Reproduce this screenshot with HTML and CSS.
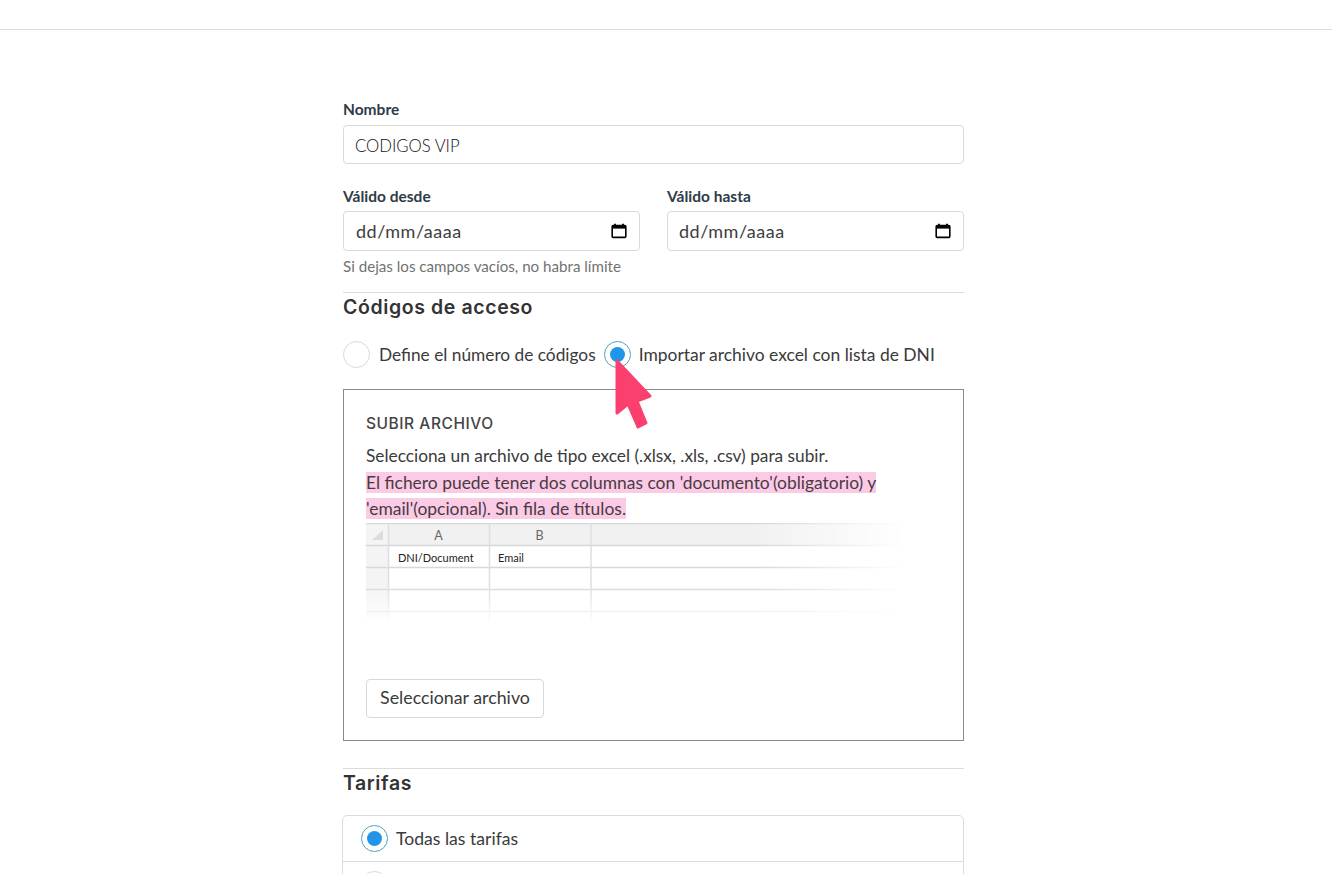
FILE: index.html
```html
<!DOCTYPE html>
<html lang="es">
<head>
<meta charset="utf-8">
<title>Códigos VIP</title>
<link rel="stylesheet" href="styles.css">
</head>
<body>
<header class="topbar"></header>
<main class="form">
  <label class="label">Nombre</label>
  <div class="input name-input">CODIGOS VIP</div>
  <div class="dates">
    <div class="date-col from">
      <label class="label">Válido desde</label>
      <div class="input date-input"><span>dd/mm/aaaa</span>
        <svg class="cal" viewBox="0 0 16 16" width="16" height="16"><path d="M4 0.8v2M12 0.8v2" stroke="#000" stroke-width="1.8"/><rect x="1.2" y="2.6" width="13.6" height="11.8" rx="1" fill="none" stroke="#000" stroke-width="1.6"/><rect x="1.2" y="2.6" width="13.6" height="3" fill="#000"/></svg>
      </div>
    </div>
    <div class="date-col to">
      <label class="label">Válido hasta</label>
      <div class="input date-input"><span>dd/mm/aaaa</span>
        <svg class="cal" viewBox="0 0 16 16" width="16" height="16"><path d="M4 0.8v2M12 0.8v2" stroke="#000" stroke-width="1.8"/><rect x="1.2" y="2.6" width="13.6" height="11.8" rx="1" fill="none" stroke="#000" stroke-width="1.6"/><rect x="1.2" y="2.6" width="13.6" height="3" fill="#000"/></svg>
      </div>
    </div>
  </div>
  <p class="hint">Si dejas los campos vacíos, no habra límite</p>
  <h2 class="section first">Códigos de acceso</h2>
  <div class="radios">
    <span class="radio"></span><span class="radio-text first-option">Define el número de códigos</span>
    <span class="radio on"></span><span class="radio-text second-option">Importar archivo excel con lista de DNI</span>
    <svg class="pointer" viewBox="0 0 44 72" width="44" height="72"><path d="M4 3 L37 38 L24 43 L33 65 L25 69 L15 46 L4 55 Z" fill="#fb3f6f" stroke="#fb3f6f" stroke-width="3" stroke-linejoin="round"/></svg>
  </div>
  <section class="upload">
    <h3 class="upload-title">SUBIR ARCHIVO</h3>
    <p class="upload-text">Selecciona un archivo de tipo excel (.xlsx, .xls, .csv) para subir.<br><mark>El fichero puede tener dos columnas con 'documento'(obligatorio) y 'email'(opcional). Sin fila de títulos.</mark></p>
    <svg class="sheet" viewBox="0 0 540 104" width="540" height="104">
      <defs>
        <linearGradient id="fx" x1="0" x2="1" y1="0" y2="0"><stop offset="0.72" stop-color="#fff"/><stop offset="1" stop-color="#000"/></linearGradient>
        <linearGradient id="fy" x1="0" x2="0" y1="0" y2="1"><stop offset="0.6" stop-color="#fff"/><stop offset="0.98" stop-color="#000"/></linearGradient>
        <mask id="mx"><rect width="540" height="104" fill="url(#fx)"/></mask>
        <mask id="my"><rect width="540" height="104" fill="url(#fy)"/></mask>
      </defs>
      <g mask="url(#mx)">
        <g mask="url(#my)">
          <rect width="540" height="22" y="0.5" fill="#f1f1f1"/>
          <rect width="22" height="104" y="0" fill="#f4f4f4"/>
          <path d="M0 0.5H540M0 22.5H540M0 44.5H540M0 66.5H540M0 88.5H540" stroke="#d8d8d8" stroke-width="1.4" fill="none"/>
          <path d="M22.500 0V104M123.500 0V104M225 0V104" stroke="#dedede" stroke-width="1.5" fill="none"/>
          <path d="M6 17 L17 17 L17 7 Z" fill="#dcdcdc"/>
        </g>
      </g>
      <text class="col" x="72.500" y="17" text-anchor="middle">A</text>
      <text class="col" x="173.500" y="17" text-anchor="middle">B</text>
      <text class="cell" x="32" y="39">DNI/Document</text>
      <text class="cell" x="132" y="39">Email</text>
    </svg>
    <button class="btn" type="button">Seleccionar archivo</button>
  </section>
  <h2 class="section tarifas">Tarifas</h2>
  <div class="list">
    <div class="list-row"><span class="radio on"></span><span class="list-text">Todas las tarifas</span></div>
    <div class="list-row"><span class="radio"></span></div>
  </div>
</main>
</body>
</html>
```
FILE: styles.css
```css
html, body {
  margin: 0;
  height: 874px;
  overflow: hidden;
  background: #fff;
  font-family: "Lato", sans-serif;
  color: #3a3a3a;
}
.topbar {
  height: 29px;
  border-bottom: 1px solid #dcdcdc;
}
.form {
  width: 621px;
  margin-left: 343px;
  padding-top: 71px;
}
.label {
  display: block;
  font-size: 15.500px;
  line-height: 16px;
  font-weight: 700;
  color: #2f3b46;
  margin-bottom: 8px;
}
.dates .label { margin-bottom: 7px; }
.input {
  box-sizing: border-box;
  border: 1px solid #d9d9d9;
  border-radius: 4px;
  background: #fff;
  color: #111;
  display: flex;
  align-items: center;
  justify-content: space-between;
}
.name-input {
  height: 39px;
  padding: 3px 11px 0;
  margin-bottom: 24px;
  font-size: 16.700px;
  font-weight: 300;
}
.dates {
  display: flex;
  justify-content: space-between;
}
.from { width: 297px; }
.to { width: 297px; }
.date-input {
  height: 40px;
  padding: 0 12px;
  font-weight: 400;
  font-size: 18px;
  letter-spacing: 0.5px;
  color: #3e3e3e;
}
.to .date-input { padding-left: 11px; }
.cal { flex: none; }
.hint {
  margin: 7px 0 18px;
  font-size: 15.150px;
  line-height: 16px;
  color: #727272;
}
.section {
  margin: 0;
  border-top: 1px solid #dcdcdc;
  font-family: "Inter", sans-serif;
  font-size: 19.500px;
  line-height: 28px;
  letter-spacing: 0.6px;
  font-weight: 600;
  color: #333;
}
.first { padding-bottom: 19px; }
.radios {
  position: relative;
  display: flex;
  align-items: center;
  height: 28px;
  font-size: 17.300px;
  margin-bottom: 21px;
  color: #3a3a3a;
}
.radio {
  flex: none;
  box-sizing: border-box;
  width: 27px;
  height: 27px;
  border-radius: 50%;
  border: 1px solid #d8d8d8;
  background: #fff;
  display: flex;
  align-items: center;
  justify-content: center;
}
.radio.on { border-color: #4aa3b8; }
.radio.on::after {
  content: "";
  width: 15px;
  height: 15px;
  border-radius: 50%;
  background: #2196e8;
}
.first-option { margin: 0 8px 0 9px; }
.second-option { margin-left: 8px; font-size: 17.450px; }
.pointer {
  position: absolute;
  left: 270px;
  top: 18px;
}
.upload {
  box-sizing: border-box;
  height: 352px;
  border: 1px solid #8a8a8a;
  padding: 24px 22px 0;
}
.upload-title {
  margin: 0 0 9px;
  font-family: "Inter", sans-serif;
  font-size: 15.500px;
  line-height: 20px;
  letter-spacing: 0.55px;
  font-weight: 500;
  color: #444;
}
.upload-text {
  margin: 0;
  width: 530px;
  font-size: 17.300px;
  line-height: 26.500px;
  color: #3a3a3a;
}
mark {
  font-size: 17.450px;
  background: #fbcbe5;
  color: #4a3a44;
}
.sheet { display: block; }
.col {
  font-family: "Lato", sans-serif;
  font-size: 12.500px;
  fill: #666;
}
.cell {
  font-family: "Lato", sans-serif;
  font-size: 11px;
  fill: #222;
}
.btn {
  display: block;
  margin-top: 52px;
  box-sizing: border-box;
  height: 39px;
  width: 178px;
  padding: 0 0 2px;
  border: 1px solid #d9d9d9;
  border-radius: 4px;
  background: #fff;
  font-family: "Lato", sans-serif;
  font-size: 17.800px;
  color: #3a3a3a;
}
.tarifas {
  margin-top: 27px;
  padding-bottom: 18px;
}
.list {
  margin-left: -1px;
  border: 1px solid #dcdcdc;
  border-radius: 5px;
}
.list-row {
  display: flex;
  align-items: center;
  height: 45px;
  padding-left: 18px;
  font-size: 17.600px;
}
.list-row + .list-row { border-top: 1px solid #dcdcdc; }
.list-text { margin-left: 8px; }
```
